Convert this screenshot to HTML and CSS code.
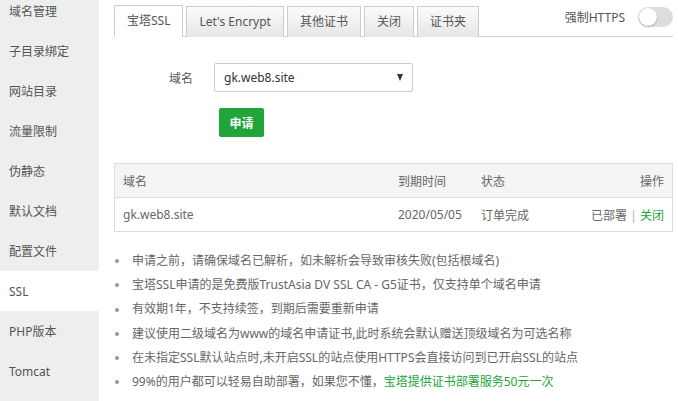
FILE: index.html
```html
<!DOCTYPE html>
<html lang="zh-CN">

<head>
    <meta charset="UTF-8">
    <title>SSL</title>
    <link rel="stylesheet" href="styles.css">
</head>

<body>
    <div class="page">
        <div class="side">
            <ul class="menu">
                <li>域名管理</li>
                <li>子目录绑定</li>
                <li>网站目录</li>
                <li>流量限制</li>
                <li>伪静态</li>
                <li>默认文档</li>
                <li>配置文件</li>
                <li class="on">SSL</li>
                <li>PHP版本</li>
                <li>Tomcat</li>
            </ul>
        </div>
        <div class="main">
            <div class="tabs">
                <span class="tab on">宝塔SSL</span>
                <span class="tab">Let's Encrypt</span>
                <span class="tab">其他证书</span>
                <span class="tab">关闭</span>
                <span class="tab">证书夹</span>
                <div class="force">
                    <span>强制HTTPS</span>
                    <span class="switch"><i></i></span>
                </div>
            </div>
            <div class="line">
                <label class="lbl">域名</label>
                <div class="select">
                    <span>gk.web8.site</span>
                    <i class="caret"></i>
                </div>
            </div>
            <div class="btns">
                <button class="btn">申请</button>
            </div>
            <table class="tbl">
                <thead>
                    <tr>
                        <th class="c1">域名</th>
                        <th class="c2">到期时间</th>
                        <th class="c3">状态</th>
                        <th class="c4">操作</th>
                    </tr>
                </thead>
                <tbody>
                    <tr>
                        <td>gk.web8.site</td>
                        <td>2020/05/05</td>
                        <td>订单完成</td>
                        <td class="c4">已部署 <span class="sep">|</span> <a class="green">关闭</a></td>
                    </tr>
                </tbody>
            </table>
            <ul class="help">
                <li>申请之前，请确保域名已解析，如未解析会导致审核失败(包括根域名)</li>
                <li>宝塔SSL申请的是免费版TrustAsia DV SSL CA - G5证书，仅支持单个域名申请</li>
                <li>有效期1年，不支持续签，到期后需要重新申请</li>
                <li>建议使用二级域名为www的域名申请证书,此时系统会默认赠送顶级域名为可选名称</li>
                <li>在未指定SSL默认站点时,未开启SSL的站点使用HTTPS会直接访问到已开启SSL的站点</li>
                <li>99%的用户都可以轻易自助部署，如果您不懂，<a class="green">宝塔提供证书部署服务50元一次</a></li>
            </ul>
        </div>
    </div>
</body>

</html>
```

FILE: styles.css
```css
body {
    margin: 0;
    font-family: "Noto Sans", "Noto Sans CJK SC", sans-serif;
    font-size: 12px;
    color: #666;
    background: #fff;
}

ul {
    margin: 0;
    padding: 0;
    list-style: none;
}

.page {
    display: flex;
    height: 401px;
    overflow: hidden;
}

.side {
    width: 99px;
    flex-shrink: 0;
    background: #eee;
    overflow: hidden;
}

.menu {
    margin-top: -9px;
}

.menu li {
    height: 38px;
    line-height: 38px;
    padding: 2px 0 0 9px;
    color: #555;
}

.menu li.on {
    background: #fff;
}

.main {
    flex: 1;
    padding: 6px 5px 0 15px;
}

.tabs {
    display: flex;
    align-items: flex-end;
    height: 30px;
    border-bottom: 1px solid #ccc;
}

.tab {
    height: 31px;
    line-height: 30px;
    padding: 0 12px;
    margin: 0 3px -1px 0;
    border: 1px solid #ccc;
    border-bottom: none;
    box-sizing: border-box;
    background: linear-gradient(#fbfbfb, #e6e6e6);
    color: #555;
}

.tab.on {
    background: #fff;
    height: 32px;
}

.force {
    margin-left: auto;
    align-self: flex-start;
    display: flex;
    align-items: center;
    color: #555;
    margin-top: 1px;
}

.switch {
    width: 35px;
    height: 20px;
    margin-left: 13px;
    border-radius: 10px;
    background: #ddd;
    display: flex;
    align-items: center;
}

.switch i {
    width: 18px;
    height: 18px;
    margin-left: 1px;
    border-radius: 50%;
    background: #fff;
    box-shadow: 0 1px 2px rgba(0, 0, 0, .25);
}

.line {
    display: flex;
    align-items: center;
    margin-top: 26px;
}

.lbl {
    width: 79px;
    text-align: right;
    margin-right: 21px;
    color: #555;
}

.select {
    width: 199px;
    height: 29px;
    box-sizing: border-box;
    border: 1px solid #ccc;
    border-radius: 2px;
    padding: 0 9px;
    display: flex;
    align-items: center;
    justify-content: space-between;
    color: #333;
}

.caret {
    width: 0;
    height: 0;
    border-left: 3.5px solid transparent;
    border-right: 3.5px solid transparent;
    border-top: 7px solid #333;
}

.btns {
    margin-top: 16px;
    padding-left: 105px;
}

.btn {
    height: 29px;
    width: 45px;
    border: none;
    border-radius: 2px;
    background: #20a53a;
    color: #fff;
    font-family: inherit;
    font-size: 12px;
    font-weight: bold;
    padding: 0;
}

.tbl {
    width: 559px;
    margin-top: 26px;
    border-collapse: collapse;
    border: 1px solid #ddd;
}

.tbl th,
.tbl td {
    height: 33px;
    padding: 0 8px;
    text-align: left;
    font-weight: normal;
    border-bottom: 1px solid #ddd;
}

.tbl th {
    background: #f4f4f4;
}

.tbl .c1 {
    width: 259px;
}

.tbl .c2 {
    width: 67px;
}

.tbl .c3 {
    width: 80px;
}

.tbl .c4 {
    text-align: right;
}

.sep {
    color: #aaa;
}

.green {
    color: #20a53a;
}

.help {
    margin-top: 17px;
}

.help li {
    line-height: 24.2px;
    display: flex;
    align-items: center;
    white-space: nowrap;
}

.help li::before {
    content: "";
    width: 4px;
    height: 4px;
    border-radius: 50%;
    background: #999;
    margin: 0 13px 0 1px;
}
```
